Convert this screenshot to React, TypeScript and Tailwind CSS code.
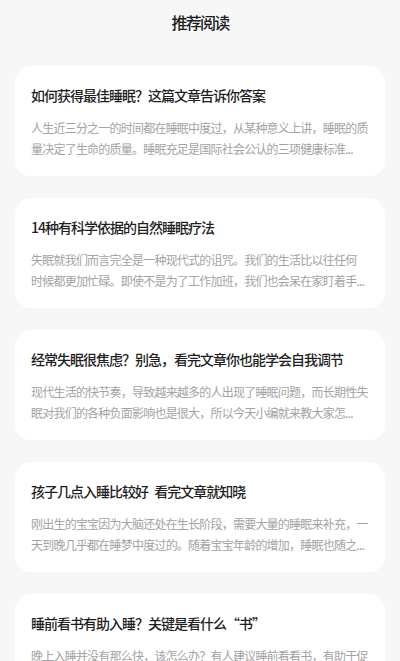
import React from "react";

const articles = [
  {
    title: "如何获得最佳睡眠？这篇文章告诉你答案",
    lines: [
      "人生近三分之一的时间都在睡眠中度过，从某种意义上讲，睡眠的质",
      "量决定了生命的质量。睡眠充足是国际社会公认的三项健康标准...",
    ],
  },
  {
    title: "14种有科学依据的自然睡眠疗法",
    lines: [
      "失眠就我们而言完全是一种现代式的诅咒。我们的生活比以往任何",
      "时候都更加忙碌。即使不是为了工作加班，我们也会呆在家盯着手...",
    ],
  },
  {
    title: "经常失眠很焦虑？别急，看完文章你也能学会自我调节",
    lines: [
      "现代生活的快节奏，导致越来越多的人出现了睡眠问题，而长期性失",
      "眠对我们的各种负面影响也是很大，所以今天小编就来教大家怎...",
    ],
  },
  {
    title: "孩子几点入睡比较好 看完文章就知晓",
    lines: [
      "刚出生的宝宝因为大脑还处在生长阶段，需要大量的睡眠来补充，一",
      "天到晚几乎都在睡梦中度过的。随着宝宝年龄的增加，睡眠也随之...",
    ],
  },
  {
    title: "睡前看书有助入睡？关键是看什么“书”",
    lines: [
      "晚上入睡并没有那么快，该怎么办？有人建议睡前看看书，有助于促",
      "进睡眠。那么睡前看书真的能帮助入睡吗？答案是要看看什么书...",
    ],
  },
];

export default function App() {
  return (
    <div
      className="w-[400px] h-[661px] overflow-hidden bg-[#f7f7f7]"
      style={{ fontFamily: '"Noto Sans CJK SC", "Noto Sans", sans-serif' }}
    >
      <div className="h-[44px] flex items-center justify-center">
        <span className="text-[16px] leading-[20px] font-medium text-[#1c1c1c] tracking-[-1.8px]">
          推荐阅读
        </span>
      </div>
      <div className="px-[15px] pt-[22px] flex flex-col gap-[22px]">
        {articles.map((a, i) => (
          <div key={i} className="bg-white rounded-[16px] px-[16px] pt-[19px] pb-[17px]">
            <div className="text-[14px] leading-[20px] font-medium text-[#1f1f1f] tracking-[-1px] [word-spacing:4px] whitespace-pre">
              {a.title}
            </div>
            <div className="mt-[12px] text-[12px] leading-[21px] text-[#a3a3a3] tracking-[-0.78px]">
              {a.lines.map((l, j) => (
                <div key={j} className="whitespace-nowrap overflow-hidden">
                  {l}
                </div>
              ))}
            </div>
          </div>
        ))}
      </div>
    </div>
  );
}
